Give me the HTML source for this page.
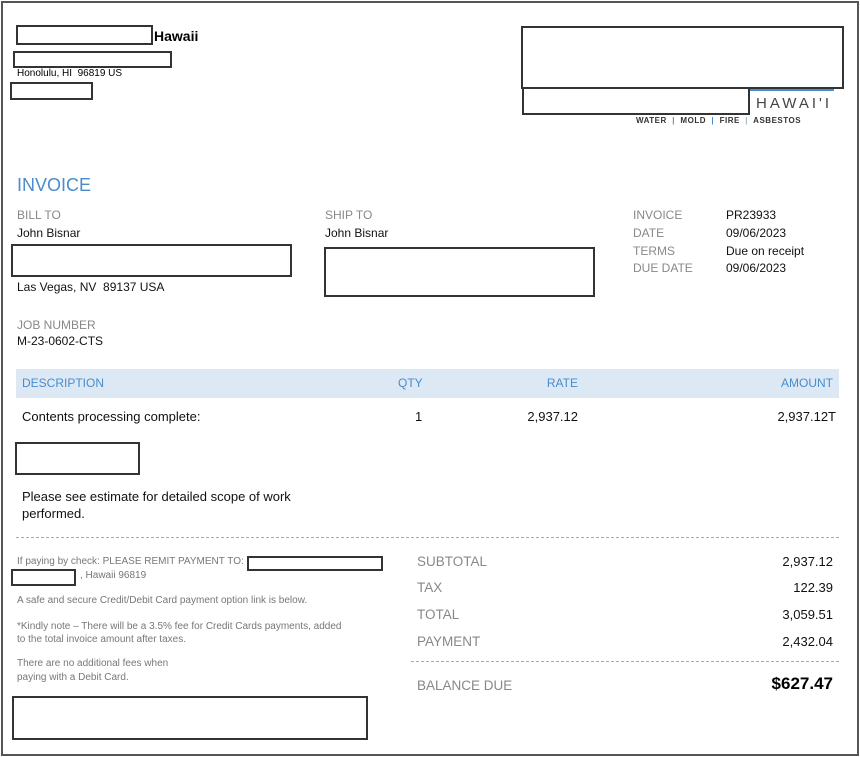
<!DOCTYPE html>
<html><head><meta charset="utf-8"><style>
*{margin:0;padding:0;box-sizing:border-box}
body{width:860px;height:757px;background:#fff;font-family:"Liberation Sans",Arial,sans-serif;position:relative;overflow:hidden}
.frame{position:absolute;left:1px;top:1px;width:858px;height:755px;border:2px solid #555}
.b{position:absolute;border:2px solid #333;background:#fff}
.t{position:absolute;white-space:nowrap;line-height:1}
.g{color:#888;font-size:12px}
.k{color:#111;font-size:12px}
.s{color:#777;font-size:10px}
.v{color:#111;font-size:13px}
.lb{color:#888;font-size:13.5px}
.h{color:#4a8ccc;font-size:12px}
.r{text-align:right}
</style></head><body>
<div class="frame"></div>

<div class="b" style="left:16px;top:25px;width:137px;height:20px"></div>
<div class="t" style="left:154px;top:29px;font-size:14px;font-weight:bold">Hawaii</div>
<div class="b" style="left:13px;top:51px;width:159px;height:17px"></div>
<div class="t" style="left:17px;top:69px;font-size:10px">Honolulu, HI&nbsp; 96819 US</div>
<div class="b" style="left:10px;top:82px;width:83px;height:18px"></div>

<div style="position:absolute;left:750px;top:89px;width:84px;height:2px;background:#4a8ccc"></div>
<div class="b" style="left:521px;top:26px;width:323px;height:63px"></div>
<div class="b" style="left:522px;top:87px;width:228px;height:28px"></div>
<div class="t" style="left:756px;top:96px;font-size:15px;letter-spacing:3px;color:#444">HAWAI'I</div>
<div class="t" style="left:636px;top:117px;font-size:8px;font-weight:bold;color:#333;letter-spacing:0.5px">WATER <span style="color:#4a8ccc">&nbsp;|&nbsp;</span> MOLD <span style="color:#4a8ccc">&nbsp;|&nbsp;</span> FIRE <span style="color:#9bc">&nbsp;|&nbsp;</span> ASBESTOS</div>

<div class="t" style="left:17px;top:176px;font-size:18px;color:#4a8ccc">INVOICE</div>

<div class="t g" style="left:17px;top:209px">BILL TO</div>
<div class="t k" style="left:17px;top:227px">John Bisnar</div>
<div class="b" style="left:11px;top:244px;width:281px;height:33px"></div>
<div class="t k" style="left:17px;top:281px">Las Vegas, NV&nbsp; 89137 USA</div>

<div class="t g" style="left:325px;top:209px">SHIP TO</div>
<div class="t k" style="left:325px;top:227px">John Bisnar</div>
<div class="b" style="left:324px;top:247px;width:271px;height:50px"></div>

<div class="t g" style="left:633px;top:209px">INVOICE</div>
<div class="t k" style="left:726px;top:209px">PR23933</div>
<div class="t g" style="left:633px;top:227px">DATE</div>
<div class="t k" style="left:726px;top:227px">09/06/2023</div>
<div class="t g" style="left:633px;top:245px">TERMS</div>
<div class="t k" style="left:726px;top:245px">Due on receipt</div>
<div class="t g" style="left:633px;top:262px">DUE DATE</div>
<div class="t k" style="left:726px;top:262px">09/06/2023</div>

<div class="t g" style="left:17px;top:319px">JOB NUMBER</div>
<div class="t k" style="left:17px;top:335px">M-23-0602-CTS</div>

<div style="position:absolute;left:16px;top:369px;width:823px;height:29px;background:#dce8f4"></div>
<div class="t h" style="left:22px;top:377px">DESCRIPTION</div>
<div class="t h" style="left:398px;top:377px">QTY</div>
<div class="t h r" style="left:478px;width:100px;top:377px">RATE</div>
<div class="t h r" style="left:733px;width:100px;top:377px">AMOUNT</div>

<div class="t v" style="left:22px;top:410px">Contents processing complete:</div>
<div class="t v" style="left:415px;top:410px">1</div>
<div class="t v r" style="left:478px;width:100px;top:410px">2,937.12</div>
<div class="t v r" style="left:700px;width:136px;top:410px">2,937.12T</div>

<div class="b" style="left:15px;top:442px;width:125px;height:33px"></div>
<div class="t v" style="left:22px;top:490px">Please see estimate for detailed scope of work</div>
<div class="t v" style="left:22px;top:507px">performed.</div>

<div style="position:absolute;left:16px;top:537px;width:823px;border-top:1px dashed #aaa"></div>

<div class="t s" style="left:17px;top:557px">If paying by check: PLEASE REMIT PAYMENT TO:</div>
<div class="b" style="left:247px;top:556px;width:136px;height:15px"></div>
<div class="b" style="left:11px;top:569px;width:65px;height:17px"></div>
<div class="t s" style="left:80px;top:571px">, Hawaii 96819</div>
<div class="t s" style="left:17px;top:596px">A safe and secure Credit/Debit Card payment option link is below.</div>
<div class="t s" style="left:17px;top:622px">*Kindly note – There will be a 3.5% fee for Credit Cards payments, added</div>
<div class="t s" style="left:17px;top:635px">to the total invoice amount after taxes.</div>
<div class="t s" style="left:17px;top:659px">There are no additional fees when</div>
<div class="t s" style="left:17px;top:673px">paying with a Debit Card.</div>
<div class="b" style="left:12px;top:696px;width:356px;height:44px"></div>

<div class="t lb" style="left:417px;top:555px">SUBTOTAL</div>
<div class="t v r" style="left:700px;width:133px;top:555px">2,937.12</div>
<div class="t lb" style="left:417px;top:581px">TAX</div>
<div class="t v r" style="left:700px;width:133px;top:581px">122.39</div>
<div class="t lb" style="left:417px;top:608px">TOTAL</div>
<div class="t v r" style="left:700px;width:133px;top:608px">3,059.51</div>
<div class="t lb" style="left:417px;top:635px">PAYMENT</div>
<div class="t v r" style="left:700px;width:133px;top:635px">2,432.04</div>
<div style="position:absolute;left:411px;top:661px;width:428px;border-top:1px dashed #aaa"></div>
<div class="t lb" style="left:417px;top:679px">BALANCE DUE</div>
<div class="t r" style="left:700px;width:133px;top:675px;font-size:17px;font-weight:bold">$627.47</div>
</body></html>
